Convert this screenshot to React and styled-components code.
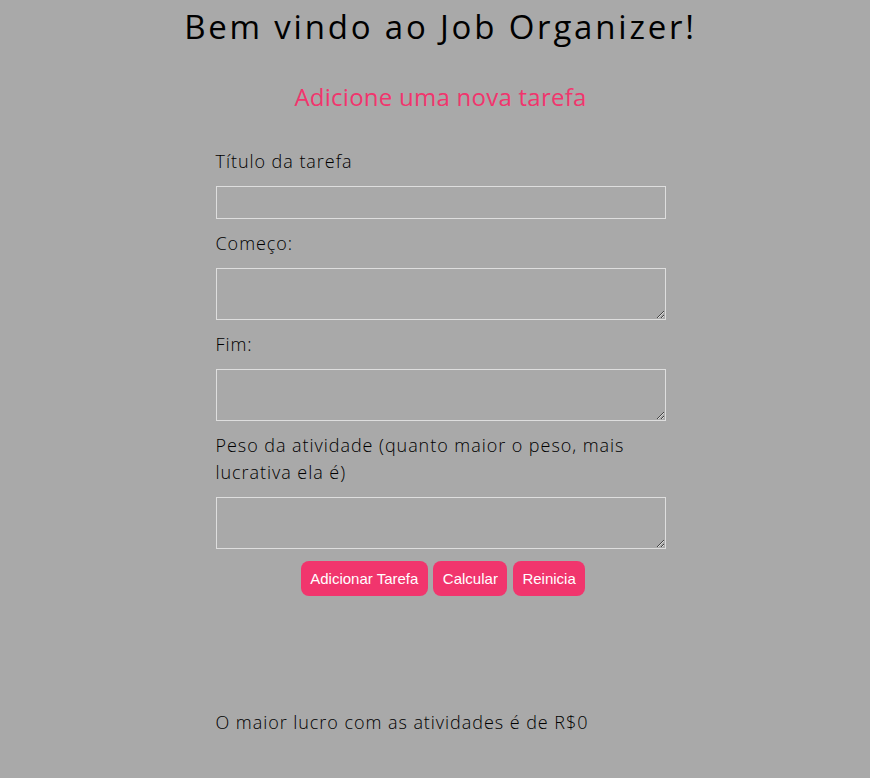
import styled, { createGlobalStyle } from 'styled-components';

const GlobalStyle = createGlobalStyle`
  html, body {
    margin: 0;
    padding: 0;
    background: #a9a9a9;
  }
  body {
    font-family: 'Open Sans', 'Liberation Sans', sans-serif;
    font-weight: 300;
    color: #000;
  }
`;

const PINK = '#f1356d';

const Page = styled.main`
  display: flex;
  flex-direction: column;
  align-items: center;
  padding: 6px 0 40px 11px;
`;

const Title = styled.h1`
  margin: 0;
  font-size: 33px;
  line-height: 42px;
  font-weight: 400;
  letter-spacing: 2.8px;
`;

const Subtitle = styled.h2`
  margin: 34px 0 0;
  font-size: 24px;
  line-height: 30px;
  font-weight: 400;
  letter-spacing: 0.25px;
  color: ${PINK};
`;

const Form = styled.form`
  width: 450px;
  margin-top: 36px;
  display: flex;
  flex-direction: column;
  gap: 11px;
`;

const Label = styled.label`
  font-size: 18px;
  line-height: 27px;
  letter-spacing: 0.95px;
`;

const Field = styled.input`
  box-sizing: border-box;
  width: 100%;
  height: ${(p) => p.$h}px;
  margin: 0;
  background: transparent;
  border: 1px solid #dedede;
  font-family: inherit;
  font-size: 16px;
`;

const Area = styled.textarea`
  box-sizing: border-box;
  width: 100%;
  height: 52px;
  margin: 0;
  background: transparent;
  border: 1px solid #dedede;
  font-family: inherit;
  font-size: 16px;
  display: block;
`;

const Buttons = styled.div`
  display: flex;
  justify-content: center;
  gap: 5.5px;
  padding-left: 5px;
  margin-top: 1px;
`;

const Button = styled.button`
  background: ${PINK};
  color: #fff;
  border: none;
  border-radius: 8px;
  height: 35px;
  padding: 0 9.5px;
  font-family: 'Liberation Sans', Arial, sans-serif;
  font-size: 15px;
  cursor: pointer;
`;

const Result = styled.p`
  width: 450px;
  margin: 113px 0 0;
  font-size: 18px;
  line-height: 27px;
  letter-spacing: 0.95px;
`;

export default function App() {
  return (
    <>
      <GlobalStyle />
      <Page>
        <Title>Bem vindo ao Job Organizer!</Title>
        <Subtitle>Adicione uma nova tarefa</Subtitle>
        <Form onSubmit={(e) => e.preventDefault()}>
          <Label>Título da tarefa</Label>
          <Field type="text" $h={33} />
          <Label>Começo:</Label>
          <Area />
          <Label>Fim:</Label>
          <Area />
          <Label>Peso da atividade (quanto maior o peso, mais lucrativa ela é)</Label>
          <Area />
          <Buttons>
            <Button type="button">Adicionar Tarefa</Button>
            <Button type="button">Calcular</Button>
            <Button type="button">Reinicia</Button>
          </Buttons>
        </Form>
        <Result>O maior lucro com as atividades é de R$0</Result>
      </Page>
    </>
  );
}
